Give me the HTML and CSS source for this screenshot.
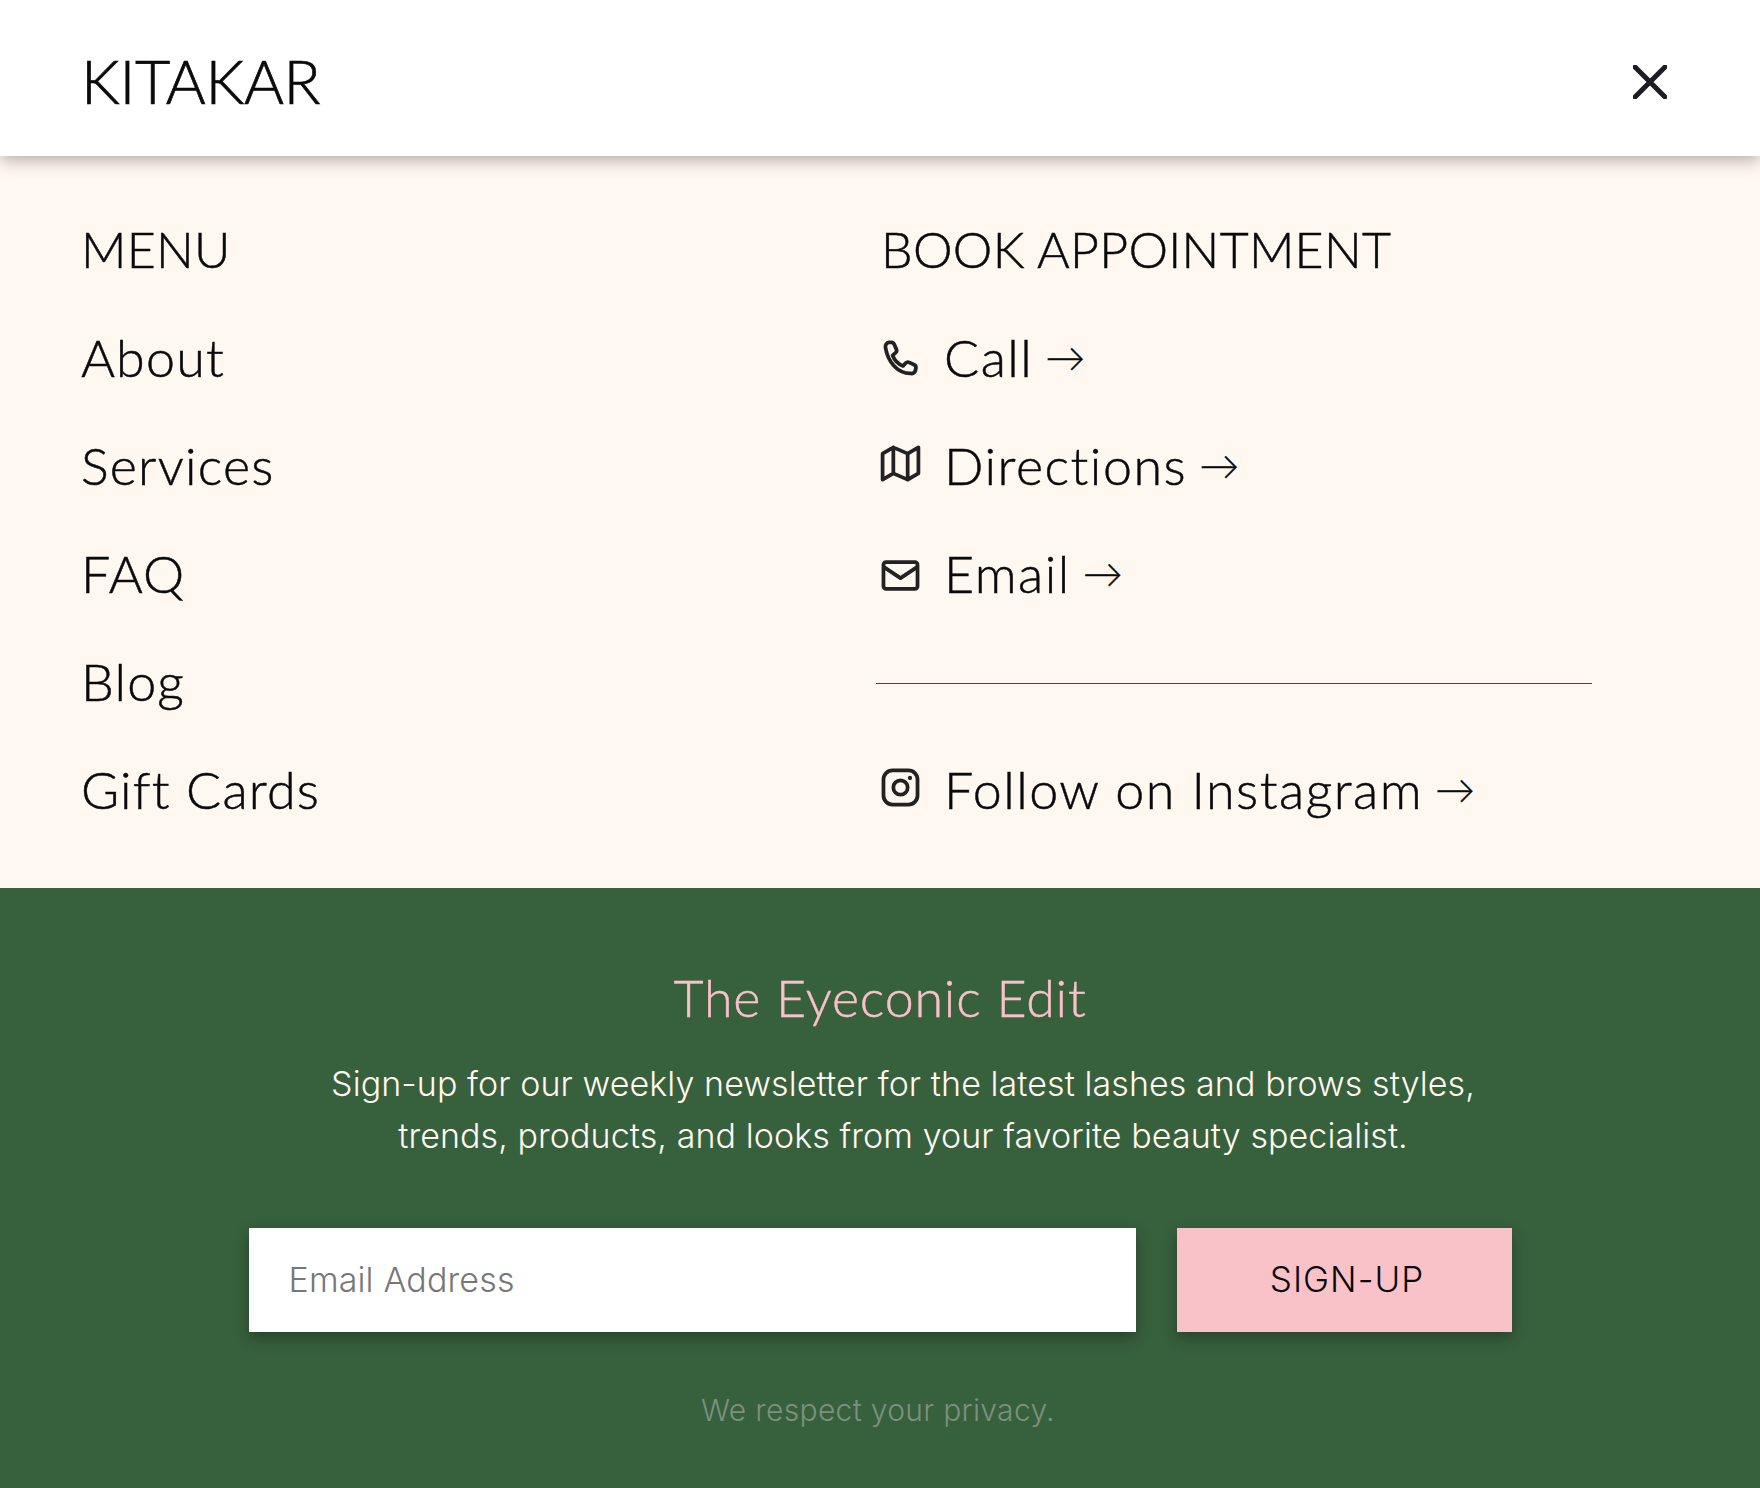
FILE: index.html
```html
<!DOCTYPE html>
<html lang="en">
<head>
<meta charset="utf-8">
<title>Kitakar</title>
<link rel="stylesheet" href="styles.css">
</head>
<body>
<header class="top">
  <a class="logo">KITAKAR</a>
  <svg class="close" viewBox="0 0 34 34"><path d="M2 2l30 30M32 2L2 32"/></svg>
</header>
<nav class="nav">
  <div class="col">
    <div class="row head">MENU</div>
    <div class="row">About</div>
    <div class="row">Services</div>
    <div class="row">FAQ</div>
    <div class="row">Blog</div>
    <div class="row">Gift Cards</div>
  </div>
  <div class="col right">
    <div class="row head">BOOK APPOINTMENT</div>
    <div class="row link"><svg class="ico low" viewBox="0 0 24 24"><path d="M3.600 5.200c-.2-1.300.7-2.500 2-2.700l1-.1c.8-.1 1.500.3 1.800 1l1.300 2.900c.3.7.1 1.400-.4 1.900l-1.700 1.500c1 2.800 3 4.800 5.800 5.900l1.500-1.600c.5-.5 1.300-.7 1.900-.4l2.800 1.300c.7.3 1.100 1 1 1.800l-.2 1.100c-.2 1.300-1.400 2.200-2.700 2C10.600 20 4.800 13.400 3.600 5.200z"/></svg><span>Call</span><span class="arrow">→</span></div>
    <div class="row link"><svg class="ico high" viewBox="0 0 24 24"><path d="M2 6.500L8 3l8 3.500L22 3v14.500L16 21l-8-3.500L2 21zM8 3v14.500M16 6.500V21"/></svg><span>Directions</span><span class="arrow">→</span></div>
    <div class="row link"><svg class="ico low" viewBox="0 0 24 24"><rect x="2.500" y="4.500" width="19" height="15" rx="1.500"/><path d="M3 7.500l9 6 9-6"/></svg><span>Email</span><span class="arrow">→</span></div>
    <div class="row rule-row"><hr class="rule"></div>
    <div class="row link"><svg class="ico high" viewBox="0 0 24 24"><rect x="2.500" y="2.500" width="19" height="19" rx="5"/><circle cx="12" cy="12" r="4"/><circle class="dot" cx="17.300" cy="6.700" r="1.200"/></svg><span>Follow on Instagram</span><span class="arrow">→</span></div>
  </div>
</nav>
<section class="news">
  <h2 class="title">The Eyeconic Edit</h2>
  <p class="lead">Sign-up for our weekly newsletter for the latest lashes and brows styles,<br>trends, products, and looks from your favorite beauty specialist.</p>
  <form class="form">
    <input class="field" type="text" placeholder="Email Address">
    <button class="btn" type="button">SIGN-UP</button>
  </form>
  <p class="note">We respect your privacy.</p>
</section>
</body>
</html>
```
FILE: styles.css
```css
* { box-sizing: border-box; }
html, body { margin: 0; padding: 0; }
body { width: 1760px; height: 1488px; overflow: hidden; background: #fff8f1; color: #0a0a0a; font-family: "Lato", sans-serif; }
.top { position: relative; z-index: 2; height: 156px; background: #fff; display: flex; align-items: center; justify-content: space-between; padding: 4px 93px 0 81px; box-shadow: 0 4px 16px rgba(40,30,20,.35); }
.logo { font-family: "Lato", sans-serif; font-weight: 300; -webkit-text-stroke: .7px #0a0a0a; font-size: 61px; letter-spacing: -.3px; line-height: 1; }
.close { width: 34px; height: 34px; margin-top: 4px; }
.close path { fill: none; stroke: #1c1c22; stroke-width: 5; stroke-linecap: round; }
.nav { height: 732px; padding: 41px 0 0 81px; display: grid; grid-template-columns: 795px 716px; background: #fff8f1; }
.col { display: flex; flex-direction: column; }
.row { height: 108px; display: flex; align-items: center; padding-bottom: 4px; font-size: 52px; font-weight: 300; -webkit-text-stroke: .5px #0a0a0a; letter-spacing: 1.200px; white-space: nowrap; }
.right .row { letter-spacing: 1.500px; }
.row.head { font-size: 50px; letter-spacing: .3px; }
.right .head { padding-left: 5px; }
.right .link { padding-left: 3px; }
.rule-row { padding-bottom: 0; }
.ico { width: 43px; height: 43px; margin-right: 22px; flex: none; }
.low { margin-top: 4px; }
.high { margin-top: -3px; }
.right .arrow { font-size: 40px; font-weight: 300; -webkit-text-stroke: .4px #0a0a0a; margin-left: 12px; letter-spacing: 0; }
.ico path, .ico rect, .ico circle { fill: none; stroke: #222; stroke-width: 2.100; stroke-linejoin: round; stroke-linecap: round; }
.ico .dot { fill: #222; stroke: none; }
.rule { width: 100%; margin: 0; border: 0; border-top: 1px solid #444; }
.news { height: 600px; background: #37603d; display: flex; flex-direction: column; align-items: center; padding-top: 79px; font-family: "Inter", sans-serif; }
.title { margin: 0; font-family: "Lato", sans-serif; font-weight: 300; -webkit-text-stroke: .4px #f9c1c8; font-size: 52px; line-height: 60px; color: #f9c1c8; letter-spacing: .8px; }
.lead { margin: 31px 0 0; padding-left: 46px; text-align: center; font-size: 34px; line-height: 52px; font-weight: 300; letter-spacing: .08px; color: #fff8f1; white-space: nowrap; }
.form { display: flex; gap: 41px; margin-top: 66px; }
.field { width: 887px; height: 104px; border: 0; padding: 0 40px 2px; background: #fff; font: 300 34px "Inter", sans-serif; letter-spacing: .15px; box-shadow: 0 6px 14px rgba(0,0,0,.3); border-radius: 0; }
.field::placeholder { color: #777; opacity: 1; }
.btn { width: 335px; height: 104px; border: 0; background: #f9c1c8; color: #0a0a0a; font: 300 35px "Inter", sans-serif; letter-spacing: 1px; box-shadow: 0 6px 14px rgba(0,0,0,.3); padding: 0 0 2px 6px; }
.note { margin: 60px 0 0; font-size: 30px; line-height: 36px; font-weight: 300; letter-spacing: .33px; color: #7c917e; padding-right: 4px; }
```
